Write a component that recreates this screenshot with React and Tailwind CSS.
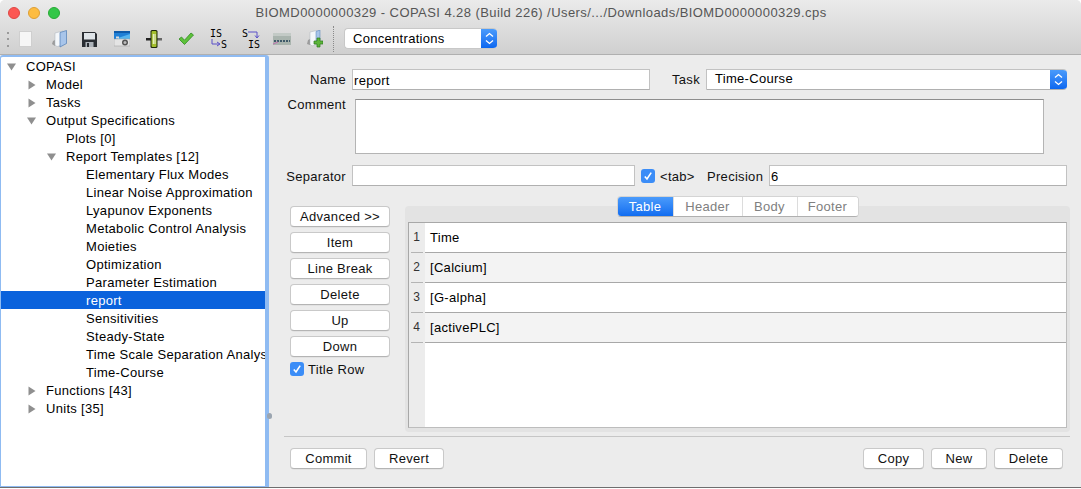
import React from "react";

function Arrow({ open, className = "" }) {
  return (
    <svg width="10" height="10" viewBox="0 0 10 10" className={className}>
      {open ? <path d="M0 1.5H9L4.5 8.5Z" fill="#8f8f8f" /> : <path d="M1.5 0.5V9.5L8.5 5Z" fill="#8f8f8f" />}
    </svg>
  );
}

const tree = [
  ["COPASI", 0, "open"],
  ["Model", 1, "closed"],
  ["Tasks", 1, "closed"],
  ["Output Specifications", 1, "open"],
  ["Plots [0]", 2],
  ["Report Templates [12]", 2, "open"],
  ["Elementary Flux Modes", 3],
  ["Linear Noise Approximation", 3],
  ["Lyapunov Exponents", 3],
  ["Metabolic Control Analysis", 3],
  ["Moieties", 3],
  ["Optimization", 3],
  ["Parameter Estimation", 3],
  ["report", 3, null, true],
  ["Sensitivities", 3],
  ["Steady-State", 3],
  ["Time Scale Separation Analysis", 3],
  ["Time-Course", 3],
  ["Functions [43]", 1, "closed"],
  ["Units [35]", 1, "closed"],
];

const pad = ["pl-[25px]", "pl-[45px]", "pl-[65px]", "pl-[85px]"];
const arrowPos = ["left-[6px]", "left-[26px]", "left-[46px]", "left-[66px]"];

function Tree() {
  return (
    <div className="w-[269px] h-[432px] shrink-0 bg-white border-l border-r-4 border-t-2 border-b border-[#8fbbf2] rounded-t-[3px] overflow-hidden">
      {tree.map(([label, lvl, state, sel]) => (
        <div
          key={label}
          className={`relative h-[18px] leading-[20px] whitespace-nowrap overflow-hidden ${pad[lvl]} ${sel ? "bg-[#0a62dc] text-white" : "text-black"}`}
        >
          {state && <Arrow open={state === "open"} className={`absolute top-[5px] ${arrowPos[lvl]}`} />}
          {label}
        </div>
      ))}
    </div>
  );
}

function Btn({ children, className = "" }) {
  return (
    <div className={`h-[21px] leading-[20px] text-center bg-white rounded-[4px] border border-[#c9c9c9] border-b-[#b4b4b4] text-[#111] shadow-[0_0.5px_0_rgba(0,0,0,0.08)] ${className}`}>
      {children}
    </div>
  );
}

function Check({ className = "" }) {
  return (
    <div className={`w-[14px] h-[14px] rounded-[3px] bg-[#3b8df7] flex items-center justify-center shrink-0 ${className}`}>
      <svg width="10" height="10" viewBox="0 0 10 10">
        <path d="M1.8 5.4L4 8L8.2 1.6" fill="none" stroke="#fff" strokeWidth="1.6" />
      </svg>
    </div>
  );
}

function Input({ className = "", children }) {
  return (
    <div className={`h-[21px] leading-[21px] bg-white border border-[#c2c2c2] border-b-[#b0b0b0] pl-[1px] text-black ${className}`}>
      {children}
    </div>
  );
}

function Stepper({ className = "" }) {
  return (
    <div className={`flex items-center justify-center bg-gradient-to-b from-[#4a9bfb] to-[#0a67f0] ${className}`}>
      <svg width="9" height="13" viewBox="0 0 9 13">
        <path d="M1 4.6L4.5 1.6L8 4.6M1 8.4L4.5 11.4L8 8.4" fill="none" stroke="#fff" strokeWidth="1.3" />
      </svg>
    </div>
  );
}

function ToolIcons() {
  return (
    <div className="flex items-center h-[30px]">
      <div className="w-[2px] h-[17px] ml-[7px] mr-[10px] flex flex-col justify-between py-[1px]">
        <div className="h-[2px] bg-[#9a9a9a]" />
        <div className="h-[2px] bg-[#9a9a9a]" />
        <div className="h-[2px] bg-[#9a9a9a]" />
      </div>
      <svg width="14" height="16" viewBox="0 0 14 16" className="mr-[19px]">
        <rect x="0.5" y="0.5" width="12" height="15" fill="#f6f6f6" stroke="#cfcfcf" />
      </svg>
      <svg width="16" height="18" viewBox="0 0 16 18" className="mr-[14px]">
        <path d="M0 14L3 16V10L1 11Z" fill="#9c9c9c" />
        <path d="M3 3L11 1V15L5 16.5L3 15Z" fill="#f4f7fa" stroke="#a8b0ba" strokeWidth="0.5" />
        <path d="M8 2.5L14.5 0.5V13.5L8 17Z" fill="#a8c5ea" stroke="#4f7cb4" strokeWidth="0.7" />
      </svg>
      <svg width="15" height="15" viewBox="0 0 15 15" className="mr-[17px]">
        <path d="M0 0H13L15 2V15H0Z" fill="#2a2e33" />
        <rect x="2" y="1" width="11" height="6.5" fill="#dfe4e8" />
        <rect x="3.5" y="10" width="8" height="5" fill="#aeb4ba" />
        <rect x="5" y="11" width="2" height="4" fill="#2a2e33" />
      </svg>
      <svg width="16" height="16" viewBox="0 0 16 16" className="mr-[16px]">
        <rect x="0" y="0" width="16" height="8" fill="#1f7fd6" />
        <rect x="0" y="0" width="16" height="2" fill="#0f5aa8" />
        <path d="M4 7L16 3V8H4Z" fill="#56b4ee" />
        <rect x="0" y="8" width="16" height="7" fill="#e4e4e4" stroke="#9a9a9a" strokeWidth="0.5" />
        <circle cx="11" cy="11.5" r="3" fill="#555" />
        <circle cx="11" cy="11.5" r="1.5" fill="#bbb" />
        <rect x="2" y="5.5" width="3" height="2" fill="#ddd" />
      </svg>
      <svg width="16" height="18" viewBox="0 0 16 18" className="mr-[16px]">
        <rect x="0" y="8" width="6" height="2.5" fill="#222" />
        <rect x="10" y="8" width="6" height="2.5" fill="#666" />
        <rect x="4.5" y="0" width="7" height="18" rx="1.5" fill="#1e2a0a" />
        <rect x="5.5" y="1" width="5" height="16" rx="1" fill="#a3bf2c" />
        <rect x="6.8" y="4" width="1" height="10" fill="#f4f8df" />
        <rect x="8.5" y="4" width="1" height="10" fill="#f4f8df" />
      </svg>
      <svg width="16" height="14" viewBox="0 0 16 14" className="mr-[16px]">
        <path d="M1 7L3.5 5L6.5 8.2L13 1L15.5 3L6.5 12.5Z" fill="#5ec23a" stroke="#2f8a22" strokeWidth="0.8" />
      </svg>
      <div className="relative w-[17px] h-[20px] mr-[15px] font-['DejaVu_Sans_Mono',monospace] tracking-normal text-[10px] leading-[10px] text-black">
        <span className="absolute left-0 top-0">IS</span>
        <svg width="10" height="8" viewBox="0 0 10 8" className="absolute left-px top-[10px]">
          <path d="M1 0V5H8M6 3L9 5L6 7" fill="none" stroke="#5a50c8" strokeWidth="1" />
        </svg>
        <span className="absolute left-[11px] top-[11px]">S</span>
      </div>
      <div className="relative w-[18px] h-[20px] mr-[13px] font-['DejaVu_Sans_Mono',monospace] tracking-normal text-[10px] leading-[10px] text-black">
        <span className="absolute left-0 top-0">S</span>
        <svg width="12" height="9" viewBox="0 0 12 9" className="absolute left-[6px] top-[1px]">
          <path d="M0 2H9V8M7 5.5L9 8L11 5.5" fill="none" stroke="#5a50c8" strokeWidth="1" />
        </svg>
        <span className="absolute left-[6px] top-[11px]">IS</span>
      </div>
      <svg width="18" height="12" viewBox="0 0 18 12" className="mr-[15px]">
        <rect width="18" height="12" fill="#a9b4ae" />
        <rect width="18" height="3" fill="#c3cac6" />
        <path d="M1 8H17" stroke="#3f5a6a" strokeWidth="2" strokeDasharray="2 1" />
        <path d="M0 11L5 9" stroke="#c070b0" strokeWidth="1" />
      </svg>
      <svg width="17" height="18" viewBox="0 0 17 18">
        <path d="M1 14L4 15V9L2 10Z" fill="#9c9c9c" />
        <path d="M4 2L13 0V13L6 16L4 14Z" fill="#f4f7fa" stroke="#a8b0ba" strokeWidth="0.5" />
        <path d="M10 1.5L14 0V10L10 11Z" fill="#a8c5ea" stroke="#4f7cb4" strokeWidth="0.5" />
        <path d="M8 11H11V8H14V11H17V14H14V17H11V14H8Z" fill="#5db53a" stroke="#2d7a1e" strokeWidth="0.7" />
      </svg>
      <div className="w-px h-[26px] ml-[10px] mr-[10px] border-l border-dotted border-[#8a8a8a]" />
      <div className="flex w-[153px] h-[21px] -mt-[1px] rounded-[4px] overflow-hidden border border-[#c8c8c8] border-r-0 bg-white">
        <div className="flex-1 leading-[19px] pl-[8px] text-black">Concentrations</div>
        <Stepper className="w-[16px]" />
      </div>
    </div>
  );
}

function Tabs() {
  const names = ["Table", "Header", "Body", "Footer"];
  const widths = ["w-[55px]", "w-[69px]", "w-[55px]", "w-[61px]"];
  return (
    <div className="flex justify-center h-[19px] relative z-10 -mt-[1px] mb-[1px]">
      <div className="flex h-[21px] rounded-[4px] overflow-hidden bg-white border border-[#d4d4d4] border-b-[#b0b0b0]">
        {names.map((n, i) => (
          <div
            key={n}
            className={`${widths[i]} text-center leading-[19px] ${i === 0 ? "bg-gradient-to-b from-[#4a9bfb] to-[#0f6cf0] text-white" : "text-[#808080] bg-white border-l border-[#dcdcdc]"}`}
          >
            {n}
          </div>
        ))}
      </div>
    </div>
  );
}

function TableRows() {
  const rows = ["Time", "[Calcium]", "[G-alpha]", "[activePLC]"];
  return (
    <div className="flex-1 flex mx-[3px] mb-[4px] border border-[#a8a8a8] border-r-[#bdbdbd] border-b-[#bdbdbd] bg-white">
      <div className="w-[16px] bg-[#ececec] shrink-0">
        {rows.map((_, i) => (
          <div key={i} className="h-[30px] pl-[2px] pr-[2px]">
            <div className="h-[30px] text-[12px] font-medium leading-[29px] pr-[1px] text-center text-[#333] border-b border-[#b4b4b4] tracking-normal">{i + 1}</div>
          </div>
        ))}
      </div>
      <div className="flex-1 min-w-0">
        {rows.map((r, i) => (
          <div key={r} className={`h-[30px] leading-[29px] pl-[5px] border-b border-[#a8a8a8] text-black ${i % 2 ? "bg-[#f3f3f3]" : "bg-white"}`}>{r}</div>
        ))}
      </div>
    </div>
  );
}

export default function App() {
  return (
    <div className="w-[1081px] h-[489px] overflow-hidden bg-white text-[13px] tracking-[0.3px] font-['Liberation_Sans',Arial,sans-serif]">
      <div className="h-[488px] bg-[#ececec] rounded-t-[5px] border-b border-[#6e6e6e] flex flex-col relative">
        <div className="h-[55px] shrink-0 bg-gradient-to-b from-[#ebebeb] to-[#d0d0d0] border-b border-[#b0b0b0] rounded-t-[5px]">
          <div className="h-[24px] relative flex items-center justify-center text-[#555] pt-[2px] pl-[1px] tracking-[0.43px]">
            <div className="absolute left-[8px] top-[7px] flex gap-[8px]">
              <div className="w-[12px] h-[12px] rounded-full bg-[#fc5753] border border-[#df4744]" />
              <div className="w-[12px] h-[12px] rounded-full bg-[#fdbc40] border border-[#de9f34]" />
              <div className="w-[12px] h-[12px] rounded-full bg-[#33c748] border border-[#27aa35]" />
            </div>
            BIOMD0000000329 - COPASI 4.28 (Build 226) /Users/.../Downloads/BIOMD0000000329.cps
          </div>
          <ToolIcons />
        </div>

        <div className="flex flex-1 min-h-0">
          <Tree />
          <div className="flex-1 min-w-0 flex flex-col pl-[15px] pr-[11px] pt-[14px]">
            <div className="flex items-center h-[21px] mr-[3px]">
              <div className="w-[62px] text-right text-[#111]">Name</div>
              <Input className="ml-[6px] w-[298px] pl-[1px]">report</Input>
              <div className="ml-[22px] w-[30px] text-[#111]">Task</div>
              <div className="ml-[4px] flex-1 flex h-[21px] bg-white border border-[#c2c2c2] border-b-[#b0b0b0] border-r-0 rounded-r-[4px] overflow-hidden">
                <div className="flex-1 leading-[18px] pl-[8px] text-black">Time-Course</div>
                <Stepper className="w-[17px]" />
              </div>
            </div>
            <div className="flex mt-[9px] h-[55px]">
              <div className="w-[62px] text-right text-[#111] leading-[15px] -mt-[2px]">Comment</div>
              <div className="ml-[9px] w-[689px] h-[55px] bg-white border border-[#b4b4b4] border-t-[#8e8e8e]" />
            </div>
            <div className="flex items-center h-[21px] mt-[11px] mr-[3px]">
              <div className="w-[62px] text-right text-[#111] pt-[2px]">Separator</div>
              <Input className="ml-[6px] w-[283px]" />
              <Check className="ml-[6px]" />
              <div className="ml-[5px] w-[36px] text-[#111] pt-[2px]">&lt;tab&gt;</div>
              <div className="ml-[11px] w-[56px] text-[#111] whitespace-nowrap pt-[2px]">Precision</div>
              <Input className="ml-[6px] flex-1 pl-[1px]">6</Input>
            </div>

            <div className="flex mt-[11px] flex-1 min-h-0">
              <div className="w-[100px] ml-[6px] shrink-0 flex flex-col gap-[5px] pt-[9px]">
                <Btn>Advanced &gt;&gt;</Btn>
                <Btn>Item</Btn>
                <Btn>Line Break</Btn>
                <Btn>Delete</Btn>
                <Btn>Up</Btn>
                <Btn>Down</Btn>
                <div className="flex items-center gap-[4px] text-[#111] h-[14px]">
                  <Check />
                  <span className="pt-[1px]">Title Row</span>
                </div>
              </div>
              <div className="flex-1 min-w-0 ml-[15px]">
                <Tabs />
                <div className="h-[226px] -mt-[10px] pt-[16px] bg-[#e3e3e3] rounded-[4px] flex flex-col">
                  <TableRows />
                </div>
              </div>
            </div>

            <div className="h-px bg-[#c6c6c6] mt-[4px]" />
            <div className="flex items-center h-[21px] mt-[11px] mb-[18px] pl-[6px] pr-[7px]">
              <Btn className="w-[77px]">Commit</Btn>
              <Btn className="w-[70px] ml-[7px]">Revert</Btn>
              <div className="flex-1" />
              <Btn className="w-[61px]">Copy</Btn>
              <Btn className="w-[56px] ml-[7px]">New</Btn>
              <Btn className="w-[69px] ml-[7px]">Delete</Btn>
            </div>
          </div>
        </div>
        <div className="absolute left-[267px] top-[413px] w-[5px] h-[6px] rounded-full bg-[#9ba5b0]" />
      </div>
    </div>
  );
}
